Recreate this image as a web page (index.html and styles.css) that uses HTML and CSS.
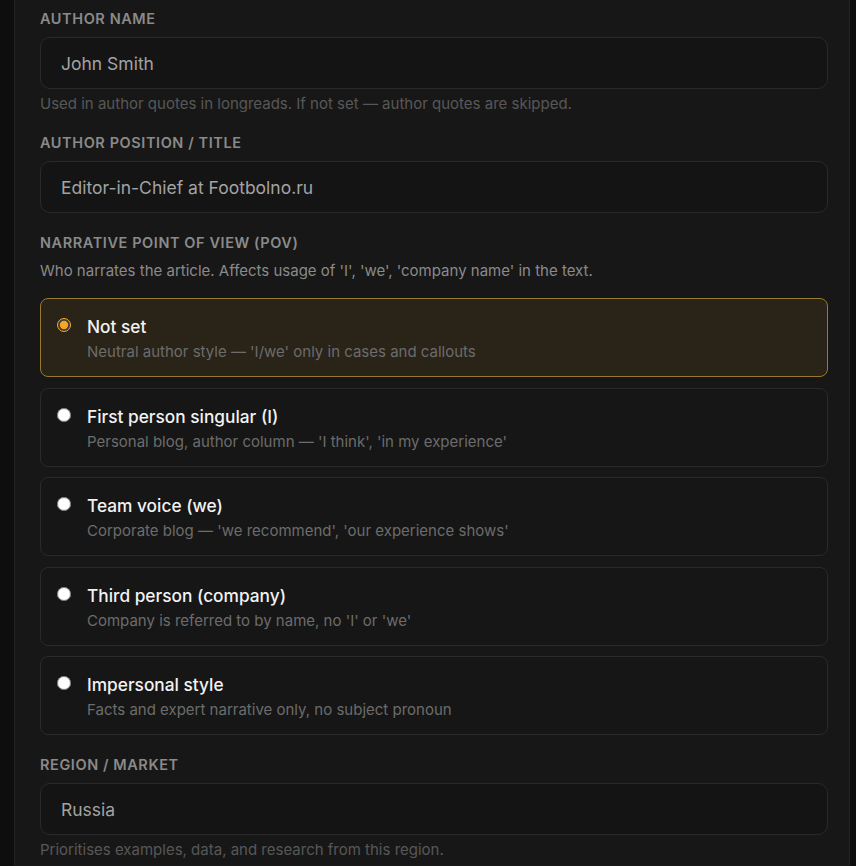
FILE: index.html
```html
<!DOCTYPE html>
<html lang="en">
<head>
    <meta charset="UTF-8">
    <meta name="viewport" content="width=device-width, initial-scale=1.0">
    <title>Author settings</title>
    <link rel="stylesheet" href="styles.css">
</head>
<body>
    <div class="panel">
        <div class="field">
            <label class="field-label" for="authorName">Author name</label>
            <input type="text" id="authorName" class="input-field" value="John Smith">
            <p class="hint">Used in author quotes in longreads. If not set — author quotes are skipped.</p>
        </div>

        <div class="field">
            <label class="field-label" for="authorTitle">Author position / title</label>
            <input type="text" id="authorTitle" class="input-field" value="Editor-in-Chief at Footbolno.ru">
        </div>

        <div class="field">
            <div class="field-label">Narrative point of view (POV)</div>
            <p class="description">Who narrates the article. Affects usage of 'I', 'we', 'company name' in the text.</p>

            <div class="pov-list">
                <label class="pov-option selected">
                    <input type="radio" name="pov" value="none" checked>
                    <span class="pov-text">
                        <span class="pov-title">Not set</span>
                        <span class="pov-sub">Neutral author style — 'I/we' only in cases and callouts</span>
                    </span>
                </label>
                <label class="pov-option">
                    <input type="radio" name="pov" value="first">
                    <span class="pov-text">
                        <span class="pov-title">First person singular (I)</span>
                        <span class="pov-sub">Personal blog, author column — 'I think', 'in my experience'</span>
                    </span>
                </label>
                <label class="pov-option">
                    <input type="radio" name="pov" value="team">
                    <span class="pov-text">
                        <span class="pov-title">Team voice (we)</span>
                        <span class="pov-sub">Corporate blog — 'we recommend', 'our experience shows'</span>
                    </span>
                </label>
                <label class="pov-option">
                    <input type="radio" name="pov" value="third">
                    <span class="pov-text">
                        <span class="pov-title">Third person (company)</span>
                        <span class="pov-sub">Company is referred to by name, no 'I' or 'we'</span>
                    </span>
                </label>
                <label class="pov-option">
                    <input type="radio" name="pov" value="impersonal">
                    <span class="pov-text">
                        <span class="pov-title">Impersonal style</span>
                        <span class="pov-sub">Facts and expert narrative only, no subject pronoun</span>
                    </span>
                </label>
            </div>
        </div>

        <div class="field">
            <label class="field-label" for="region">Region / market</label>
            <input type="text" id="region" class="input-field" value="Russia">
            <p class="hint">Prioritises examples, data, and research from this region.</p>
        </div>
    </div>

    <script>
        // подсветка выбранного варианта POV
        document.querySelectorAll('.pov-option input').forEach(function(radio) {
            radio.addEventListener('change', function() {
                document.querySelectorAll('.pov-option').forEach(function(opt) {
                    opt.classList.remove('selected');
                });
                radio.closest('.pov-option').classList.add('selected');
            });
        });
    </script>
</body>
</html>
```

FILE: styles.css
```css
html, body {
    margin: 0;
    padding: 0;
    height: 100%;
    background-color: #0e0e0e;
    font-family: Inter, "Noto Sans", sans-serif;
    color: #e8e8e8;
    overflow: hidden;
}

.panel {
    margin-left: 14px;
    width: 836px;
    min-height: 100%;
    box-sizing: border-box;
    padding: 9px 21px 0 25px;
    background-color: #171717;
    border-left: 1px solid #242424;
    border-right: 1px solid #242424;
}

.field {
    margin-bottom: 20px;
}

.field-label {
    display: block;
    font-size: 14.5px;
    font-weight: 600;
    letter-spacing: 0.04em;
    text-transform: uppercase;
    color: #8a8a8a;
    line-height: 19px;
    margin-bottom: 9px;
}

.input-field {
    display: block;
    width: 100%;
    height: 52px;
    padding: 0 20px;
    box-sizing: border-box;
    background-color: #141414;
    border: 1px solid #2a2a2a;
    border-radius: 10px;
    font-family: inherit;
    font-size: 17.5px;
    color: #a3a3a3;
    outline: none;
}

.input-field:focus {
    border-color: #3a3a3a;
}

.hint {
    margin: 5px 0 0;
    font-size: 15px;
    line-height: 19px;
    color: #575757;
}

.description {
    margin: 1px 0 18px;
    font-size: 15px;
    line-height: 19px;
    color: #8a8a8a;
}

/* список вариантов POV */
.pov-list {
    display: flex;
    flex-direction: column;
    gap: 10.5px;
}

.pov-option {
    display: flex;
    align-items: flex-start;
    gap: 16px;
    height: 79px;
    box-sizing: border-box;
    padding: 17px 16px 0 16px;
    background-color: #161616;
    border: 1px solid #2a2a2a;
    border-radius: 8px;
    cursor: pointer;
}

.pov-option input {
    margin: 2px 0 0 0;
    width: 14px;
    height: 14px;
    accent-color: #f5a623;
    flex-shrink: 0;
}

.pov-option.selected {
    background-color: #2a2318;
    border-color: #977a30;
}

.pov-text {
    display: flex;
    flex-direction: column;
}

.pov-title {
    font-size: 17.3px;
    font-weight: 500;
    line-height: 22px;
    color: #f2f2f2;
}

.pov-sub {
    margin-top: 4px;
    font-size: 15px;
    line-height: 19px;
    color: #6c6c6c;
}
```
